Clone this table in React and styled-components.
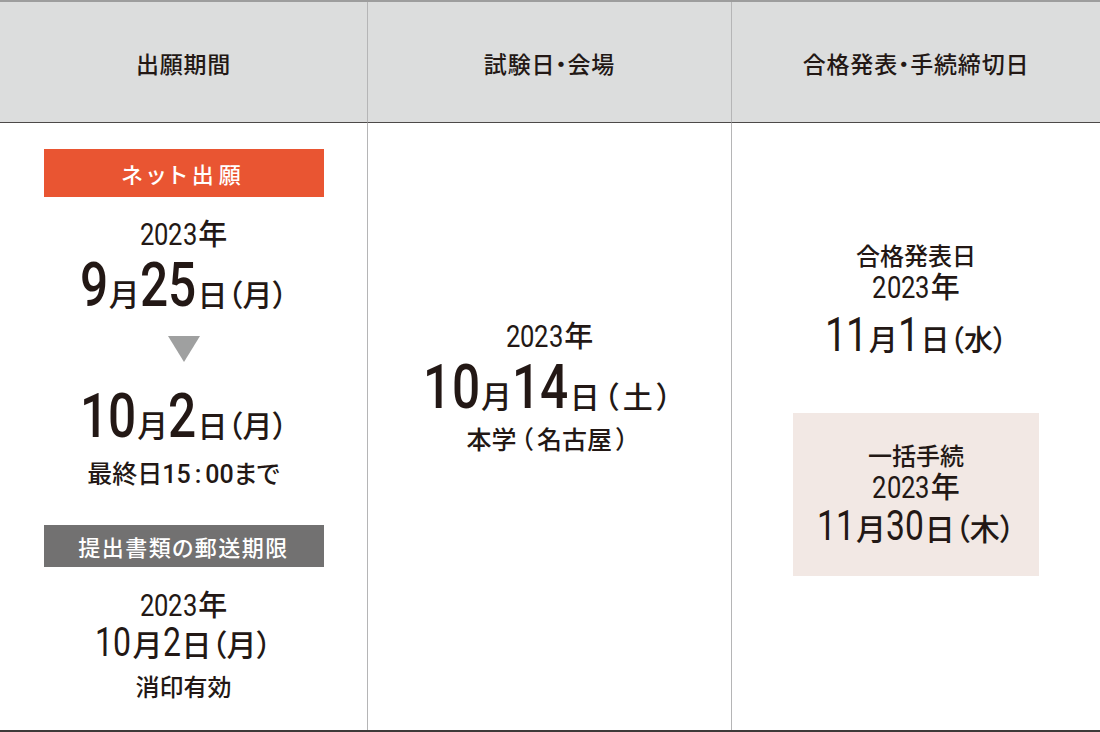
import React from "react";
import styled, { createGlobalStyle } from "styled-components";

const GlobalStyle = createGlobalStyle`
  html, body {
    margin: 0;
    padding: 0;
    background: #fff;
  }
  body {
    font-family: "Noto Sans CJK JP", "Noto Sans", sans-serif;
    color: #231815;
    font-feature-settings: "palt";
  }
`;

// condensed digits: each glyph squeezed horizontally, advance trimmed to match
const Num = ({ size, children }) => (
  <NumWrap size={size}>
    {String(children).split("").map((c, i) => (
      <Digit key={i}>{c}</Digit>
    ))}
  </NumWrap>
);

const App = () => {
  return (
    <>
      <GlobalStyle />
      <Table>
        <HeadCell>出願期間</HeadCell>
        <HeadCell>試験日・会場</HeadCell>
        <HeadCell last>合格発表・手続締切日</HeadCell>

        <BodyCell top={26}>
          <Tag color="#e95532" h={48} spacing={5}>ネット出願</Tag>
          <Line mt={20}><Num size={32}>2023</Num><Unit size={29}>年</Unit></Line>
          <Line mt={2}>
            <Num size={62}>9</Num><Unit size={31}>月</Unit>
            <Num size={62}>25</Num><Unit size={30}>日（月）</Unit>
          </Line>
          <Arrow />
          <Line mt={22}>
            <Num size={62}>10</Num><Unit size={31}>月</Unit>
            <Num size={62}>2</Num><Unit size={30}>日（月）</Unit>
          </Line>
          <Note size={25} mt={10}>最終日<Plain>15<Colon>:</Colon>00</Plain>まで</Note>
          <Tag color="#727171" h={42} spacing={1.5} mt={35}>提出書類の郵送期限</Tag>
          <Line mt={21}><Num size={32}>2023</Num><Unit size={29}>年</Unit></Line>
          <Line>
            <Num size={40}>10</Num><Unit size={30}>月</Unit>
            <Num size={40}>2</Num><Unit size={30}>日（月）</Unit>
          </Line>
          <Note size={24} mt={8}>消印有効</Note>
        </BodyCell>

        <BodyCell top={196}>
          <Line><Num size={32}>2023</Num><Unit size={29}>年</Unit></Line>
          <Line mt={2}>
            <Num size={62}>10</Num><Unit size={31}>月</Unit>
            <Num size={62}>14</Num><Unit size={30}>日<Paren>（</Paren>土<Paren>）</Paren></Unit>
          </Line>
          <Note size={25} mt={4}>本学<Paren>（</Paren>名古屋<Paren>）</Paren></Note>
        </BodyCell>

        <BodyCell top={118} last>
          <Note size={24}>合格発表日</Note>
          <Line mt={1}><Num size={32}>2023</Num><Unit size={29}>年</Unit></Line>
          <Line mt={6}>
            <Num size={48}>11</Num><Unit size={29}>月</Unit>
            <Num size={48}>1</Num><Unit size={29}>日（水）</Unit>
          </Line>
          <PinkBox>
            <Note size={24}>一括手続</Note>
            <Line mt={2}><Num size={32}>2023</Num><Unit size={29}>年</Unit></Line>
            <Line>
              <Num size={42}>11</Num><Unit size={30}>月</Unit>
              <Num size={42}>30</Num><Unit size={30}>日（木）</Unit>
            </Line>
          </PinkBox>
        </BodyCell>
      </Table>
    </>
  );
};

export default App;

const Table = styled.div`
  width: 1100px;
  height: 732px;
  box-sizing: border-box;
  display: grid;
  grid-template-columns: 368px 364px 1fr;
  grid-template-rows: 121px 1fr;
  border-top: 2px solid #9d9d9d;
  border-bottom: 2px solid #3e3a39;
`;

const HeadCell = styled.div`
  background: #dcdddd;
  border-bottom: 1px solid #4c4948;
  border-right: ${(p) => (p.last ? "none" : "1px solid #b5b5b6")};
  display: flex;
  align-items: center;
  justify-content: center;
  font-size: 23px;
  font-weight: 500;
  letter-spacing: 0.8px;
  padding-top: 2px;
`;

const BodyCell = styled.div`
  border-right: ${(p) => (p.last ? "none" : "1px solid #b5b5b6")};
  display: flex;
  flex-direction: column;
  align-items: center;
  padding-top: ${(p) => p.top}px;
`;

const Tag = styled.div`
  width: 280px;
  height: ${(p) => p.h}px;
  background: ${(p) => p.color};
  color: #fff;
  display: flex;
  align-items: center;
  justify-content: center;
  font-size: 22px;
  font-weight: 500;
  letter-spacing: ${(p) => p.spacing}px;
  margin-top: ${(p) => p.mt || 0}px;
`;

const Line = styled.div`
  display: flex;
  align-items: baseline;
  line-height: 1.04;
  margin-top: ${(p) => p.mt || 0}px;
`;

const NumWrap = styled.span`
  font-family: Roboto, "Liberation Sans", sans-serif;
  font-weight: ${(p) => (p.size >= 60 ? 500 : 400)};
  font-size: ${(p) => p.size}px;
  white-space: nowrap;
`;

const Digit = styled.span`
  display: inline-block;
  transform: scaleX(0.8);
  transform-origin: left center;
  margin-right: -0.112em;
`;

const Plain = styled.span`
  font-family: Roboto, "Liberation Sans", sans-serif;
  font-weight: 500;
`;

const Colon = styled.span`
  margin: 0 4px;
`;

const Paren = styled.span`
  margin: 0 4px;
`;

const Unit = styled.span`
  font-family: "Noto Sans CJK JP", sans-serif;
  font-size: ${(p) => p.size}px;
  font-weight: 500;
  margin-left: 1px;
`;

const Note = styled.div`
  font-size: ${(p) => p.size}px;
  font-weight: 500;
  line-height: 1.15;
  margin-top: ${(p) => p.mt || 0}px;
`;

const Arrow = styled.div`
  width: 0;
  height: 0;
  margin-top: 18px;
  border-left: 16px solid transparent;
  border-right: 16px solid transparent;
  border-top: 26px solid #9fa0a0;
`;

const PinkBox = styled.div`
  width: 246px;
  height: 163px;
  margin-top: 53px;
  background: #f2e8e4;
  display: flex;
  flex-direction: column;
  align-items: center;
  justify-content: center;
`;
